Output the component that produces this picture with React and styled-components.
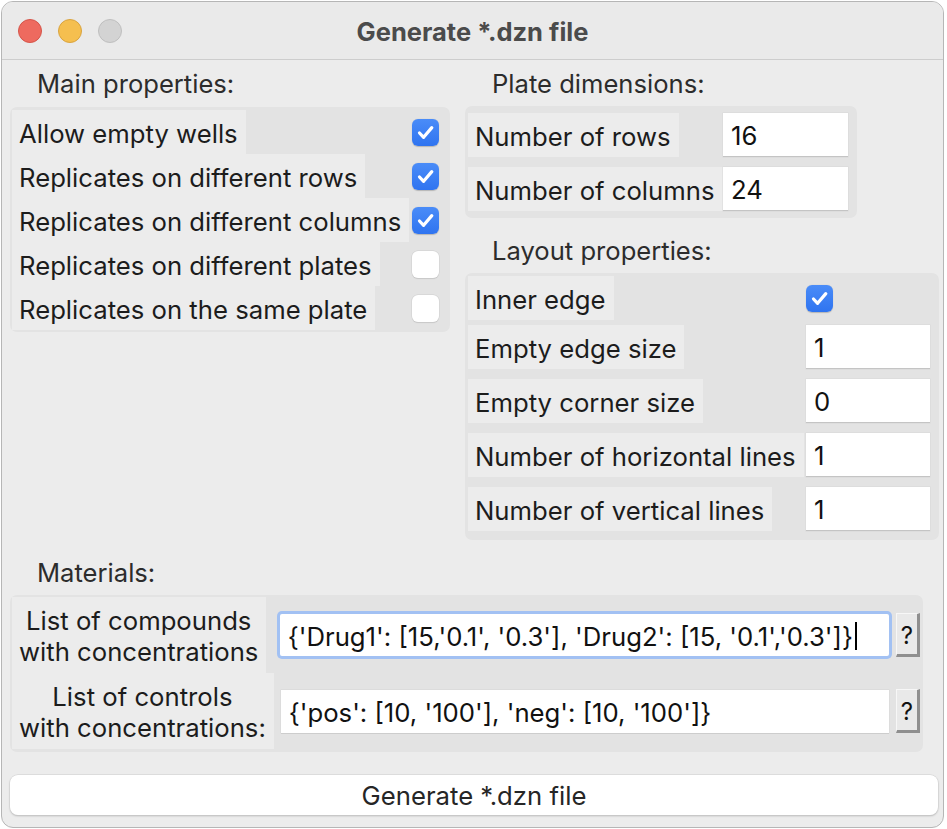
import React from "react";
import styled, { createGlobalStyle } from "styled-components";

const GlobalStyle = createGlobalStyle`
  html, body {
    margin: 0;
    padding: 0;
    background: #ffffff;
  }
  body {
    font-family: Inter, "Noto Sans", sans-serif;
    color: #1c1c1c;
  }
`;

const Window = styled.div`
  box-sizing: border-box;
  margin: 1px 0 0 1px;
  width: 943px;
  height: 827px;
  border: 1px solid #b6b6b6;
  border-radius: 12px;
  overflow: hidden;
  background: #ececec;
  display: flex;
  flex-direction: column;
`;

const TitleBar = styled.div`
  height: 57px;
  flex-shrink: 0;
  border-bottom: 1px solid #cdcdcd;
  background: #eaeaea;
  display: grid;
  grid-template-columns: 1fr auto 1fr;
  align-items: center;
  padding: 0 16px;
`;

const Lights = styled.div`
  display: flex;
  gap: 16px;
`;

const Light = styled.span`
  width: 24px;
  height: 24px;
  box-sizing: border-box;
  border-radius: 50%;
  background: ${(p) => p.$fill};
  border: 1px solid ${(p) => p.$edge};
`;

const Title = styled.div`
  font-size: 25.5px;
  font-weight: 700;
  color: #4b4b4b;
  padding-top: 2px;
`;

const Body = styled.div`
  display: grid;
  grid-template-columns: 440px 474px;
  column-gap: 15px;
  padding: 0 8px;
`;

const Column = styled.div`
  display: flex;
  flex-direction: column;
  align-items: flex-start;
`;

const Header = styled.div`
  height: ${(p) => p.$h || 46}px;
  margin-top: ${(p) => p.$top || 0}px;
  display: flex;
  align-items: center;
  padding-left: 27px;
  font-size: 25.6px;
  color: #2c2c2c;
`;

const Group = styled.div`
  box-sizing: border-box;
  width: ${(p) => p.$w}px;
  background: #e3e3e3;
  border-radius: 7px;
  padding: ${(p) => p.$pad};
  display: flex;
  flex-direction: column;
`;

const FieldRow = styled.div`
  display: flex;
  align-items: center;
  justify-content: space-between;
  margin-top: ${(p) => p.$mt || 0}px;
`;

const Label = styled.div`
  height: 44px;
  padding: 2px 8px 0 7px;
  box-sizing: border-box;
  display: flex;
  align-items: center;
  background: #ececec;
  font-size: 25.7px;
  white-space: nowrap;
`;

const Entry = styled.div`
  box-sizing: border-box;
  flex-shrink: 0;
  width: ${(p) => p.$w}px;
  height: 44px;
  background: #ffffff;
  border-bottom: 1px solid #c4c4c4;
  box-shadow: 0 0 0 0.5px #d8d8d8;
  padding: 2px 0 0 8px;
  display: flex;
  align-items: center;
  font-size: 25.7px;
  color: #111;
`;

const CheckSlot = styled.div`
  flex-shrink: 0;
  width: ${(p) => p.$w}px;
  display: flex;
  justify-content: ${(p) => (p.$start ? "flex-start" : "flex-end")};
  margin-left: ${(p) => (p.$start ? -2 : 0)}px;
`;

const Box = styled.span`
  flex-shrink: 0;
  width: 27px;
  height: 27px;
  box-sizing: border-box;
  border-radius: 6px;
  display: flex;
  align-items: center;
  justify-content: center;
  background: ${(p) => (p.$on ? "linear-gradient(#4a8cf8, #2f74f0)" : "#ffffff")};
  box-shadow: ${(p) =>
    p.$on ? "0 0.5px 1px rgba(0,0,0,0.2)" : "0 0 0 0.5px #cfcfcf, 0 0.5px 1px rgba(0,0,0,0.15)"};
`;

const Materials = styled.div`
  grid-column: 1 / -1;
  display: flex;
  flex-direction: column;
`;

const MatGrid = styled.div`
  box-sizing: border-box;
  width: 913px;
  background: #e3e3e3;
  border-radius: 7px;
  padding: 2px 3px 3px 2px;
  display: grid;
  grid-template-columns: max-content 1fr 24px;
  column-gap: 7px;
  align-items: center;
`;

const MatLabel = styled.div`
  justify-self: start;
  height: 76px;
  box-sizing: border-box;
  padding: 2px 8px 0 7px;
  background: #ececec;
  display: flex;
  align-items: center;
  text-align: center;
  font-size: 25.7px;
  line-height: 31px;
`;

const LongEntry = styled.div`
  box-sizing: border-box;
  height: ${(p) => (p.$focus ? 42 : 43)}px;
  margin: ${(p) => (p.$focus ? "0 0 0 -1px" : "0")};
  background: #ffffff;
  border-radius: ${(p) => (p.$focus ? 2 : 0)}px;
  box-shadow: ${(p) =>
    p.$focus ? "0 0 0 3px #a2c1f3" : "0 0 0 0.5px #d6d6d6, 0 1px 0 #c4c4c4"};
  padding: 2px 0 0 8px;
  display: flex;
  align-items: center;
  font-size: 25.7px;
  color: #111;
  white-space: nowrap;
  overflow: hidden;
`;

const Caret = styled.span`
  display: inline-block;
  flex-shrink: 0;
  width: 2px;
  height: 28px;
  margin-left: 2px;
  background: #000;
`;

const HelpButton = styled.button`
  box-sizing: border-box;
  width: 24px;
  height: 44px;
  padding: 2px 0 0 0;
  background: #e9e9e9;
  border-style: solid;
  border-width: 1px 3px 3px 1px;
  border-color: #f7f7f7 #8f8f8f #8f8f8f #f7f7f7;
  font-family: inherit;
  font-size: 24px;
  color: #111;
  display: flex;
  align-items: center;
  justify-content: center;
`;

const GenerateButton = styled.button`
  box-sizing: border-box;
  width: 928px;
  height: 40px;
  margin-top: 23px;
  background: #ffffff;
  border: none;
  border-radius: 8px;
  box-shadow: 0 0 0 0.5px #d0d0d0, 0 1px 2px rgba(0, 0, 0, 0.25);
  font-family: inherit;
  font-size: 25.7px;
  color: #262626;
`;

const Check = ({ on }) => (
  <Box $on={on}>
    {on && (
      <svg width="27" height="27" viewBox="0 0 27 27">
        <path
          d="M7.5 14 L11.6 18.3 L19.8 8.6"
          fill="none"
          stroke="#fff"
          strokeWidth="3.2"
          strokeLinecap="round"
          strokeLinejoin="round"
        />
      </svg>
    )}
  </Box>
);

const mainProps = [
  ["Allow empty wells", true],
  ["Replicates on different rows", true],
  ["Replicates on different columns", true],
  ["Replicates on different plates", false],
  ["Replicates on the same plate", false],
];

const layoutProps = [
  ["Empty edge size", "1", 5],
  ["Empty corner size", "0", 10],
  ["Number of horizontal lines", "1", 10],
  ["Number of vertical lines", "1", 10],
];

export default function App() {
  return (
    <>
      <GlobalStyle />
      <Window>
        <TitleBar>
          <Lights>
            <Light $fill="#ee6a5f" $edge="#d5554a" />
            <Light $fill="#f5bf4f" $edge="#d9a440" />
            <Light $fill="#d3d3d3" $edge="#bfbfbf" />
          </Lights>
          <Title>Generate *.dzn file</Title>
          <span />
        </TitleBar>

        <Body>
          <Column>
            <Header $h={47}>Main properties:</Header>
            <Group $w={440} $pad="3px 11px 2px 2px">
              {mainProps.map(([text, on]) => (
                <FieldRow key={text}>
                  <Label>{text}</Label>
                  <Check on={on} />
                </FieldRow>
              ))}
            </Group>
          </Column>

          <Column>
            <Header>Plate dimensions:</Header>
            <Group $w={392} $pad="7px 9px 7px 3px">
              <FieldRow>
                <Label>Number of rows</Label>
                <Entry $w={125}>16</Entry>
              </FieldRow>
              <FieldRow $mt={10}>
                <Label>Number of columns</Label>
                <Entry $w={125}>24</Entry>
              </FieldRow>
            </Group>

            <Header $top={9}>Layout properties:</Header>
            <Group $w={474} $pad="3px 9px 9px 3px">
              <FieldRow>
                <Label>Inner edge</Label>
                <CheckSlot $w={124} $start>
                  <Check on />
                </CheckSlot>
              </FieldRow>
              {layoutProps.map(([text, value, mt]) => (
                <FieldRow key={text} $mt={mt}>
                  <Label>{text}</Label>
                  <Entry $w={124}>{value}</Entry>
                </FieldRow>
              ))}
            </Group>
          </Column>

          <Materials>
            <Header $top={9}>Materials:</Header>
            <MatGrid>
              <MatLabel>
                List of compounds
                <br />
                with concentrations
              </MatLabel>
              <LongEntry $focus>
                {"{'Drug1': [15,'0.1', '0.3'], 'Drug2': [15, '0.1','0.3']}"}
                <Caret />
              </LongEntry>
              <HelpButton>?</HelpButton>

              <MatLabel>
                List of controls
                <br />
                with concentrations:
              </MatLabel>
              <LongEntry>{"{'pos': [10, '100'], 'neg': [10, '100']}"}</LongEntry>
              <HelpButton>?</HelpButton>
            </MatGrid>
            <GenerateButton>Generate *.dzn file</GenerateButton>
          </Materials>
        </Body>
      </Window>
    </>
  );
}
